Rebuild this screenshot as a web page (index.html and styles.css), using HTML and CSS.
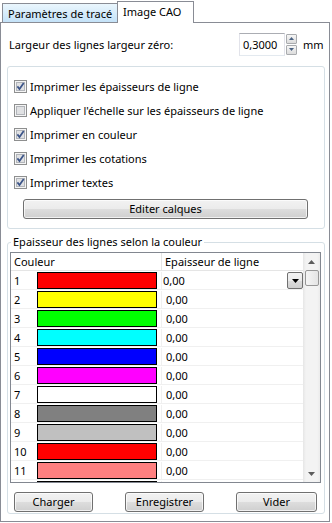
FILE: index.html
```html
<!DOCTYPE html>
<html lang="fr">
	<head>
		<meta charset="UTF-8" />
		<title>Image CAO</title>
		<link rel="stylesheet" href="styles.css">
	</head>
	<body>
		<!-- onglets -->
		<div class="tabs">
			<div class="tab">Paramètres de tracé</div>
			<div class="tab active">Image CAO</div>
		</div>

		<div class="panel">
			<div class="width-row">
				<span class="label">Largeur des lignes largeur zéro:</span>
				<div class="spin">
					<div class="spin-input">0,3000</div>
					<div class="spin-btns">
						<span class="spin-btn"><svg width="5" height="3" viewBox="0 0 5 3"><path d="M0 3h5L2.5 0z" fill="#4a6282"/></svg></span>
						<span class="spin-btn"><svg width="5" height="3" viewBox="0 0 5 3"><path d="M0 0h5L2.5 3z" fill="#4a6282"/></svg></span>
					</div>
				</div>
				<span class="unit">mm</span>
			</div>

			<!-- options d'impression -->
			<div class="group options">
				<div class="check">
					<svg class="cb" width="13" height="13" viewBox="0 0 13 13"><rect x=".5" y=".5" width="12" height="12" fill="#f5f5f5" stroke="#8e8f8f"/><rect x="2.5" y="2.5" width="8" height="8" fill="#e0e1e3" stroke="#b2b5ba"/><path d="M3.4 6.4l2.1 2.6 4.2-6" fill="none" stroke="#3b5488" stroke-width="1.7"/></svg>
					<span>Imprimer les épaisseurs de ligne</span>
				</div>
				<div class="check">
					<svg class="cb" width="13" height="13" viewBox="0 0 13 13"><rect x=".5" y=".5" width="12" height="12" fill="#f5f5f5" stroke="#8e8f8f"/><rect x="2.5" y="2.5" width="8" height="8" fill="#e0e1e3" stroke="#b2b5ba"/></svg>
					<span>Appliquer l'échelle sur les épaisseurs de ligne</span>
				</div>
				<div class="check">
					<svg class="cb" width="13" height="13" viewBox="0 0 13 13"><rect x=".5" y=".5" width="12" height="12" fill="#f5f5f5" stroke="#8e8f8f"/><rect x="2.5" y="2.5" width="8" height="8" fill="#e0e1e3" stroke="#b2b5ba"/><path d="M3.4 6.4l2.1 2.6 4.2-6" fill="none" stroke="#3b5488" stroke-width="1.7"/></svg>
					<span>Imprimer en couleur</span>
				</div>
				<div class="check">
					<svg class="cb" width="13" height="13" viewBox="0 0 13 13"><rect x=".5" y=".5" width="12" height="12" fill="#f5f5f5" stroke="#8e8f8f"/><rect x="2.5" y="2.5" width="8" height="8" fill="#e0e1e3" stroke="#b2b5ba"/><path d="M3.4 6.4l2.1 2.6 4.2-6" fill="none" stroke="#3b5488" stroke-width="1.7"/></svg>
					<span>Imprimer les cotations</span>
				</div>
				<div class="check">
					<svg class="cb" width="13" height="13" viewBox="0 0 13 13"><rect x=".5" y=".5" width="12" height="12" fill="#f5f5f5" stroke="#8e8f8f"/><rect x="2.5" y="2.5" width="8" height="8" fill="#e0e1e3" stroke="#b2b5ba"/><path d="M3.4 6.4l2.1 2.6 4.2-6" fill="none" stroke="#3b5488" stroke-width="1.7"/></svg>
					<span>Imprimer textes</span>
				</div>
				<div class="btn btn-wide">Editer calques</div>
			</div>

			<!-- épaisseurs par couleur -->
			<fieldset class="group colors">
				<legend>Epaisseur des lignes selon la couleur</legend>
				<div class="list">
					<div class="list-main">
						<div class="list-head">
							<div class="col-a">Couleur</div>
							<div class="col-b">Epaisseur de ligne</div>
						</div>
						<div class="row">
							<div class="col-a"><span class="num">1</span><span class="swatch" style="background:#ff0000"></span></div>
							<div class="col-b edit"><span class="value">0,00</span><span class="drop"><svg width="7" height="4" viewBox="0 0 7 4"><path d="M0 0h7L3.5 4z" fill="#000"/></svg></span></div>
						</div>
						<div class="row">
							<div class="col-a"><span class="num">2</span><span class="swatch" style="background:#ffff00"></span></div>
							<div class="col-b">0,00</div>
						</div>
						<div class="row">
							<div class="col-a"><span class="num">3</span><span class="swatch" style="background:#00ff00"></span></div>
							<div class="col-b">0,00</div>
						</div>
						<div class="row">
							<div class="col-a"><span class="num">4</span><span class="swatch" style="background:#00ffff"></span></div>
							<div class="col-b">0,00</div>
						</div>
						<div class="row">
							<div class="col-a"><span class="num">5</span><span class="swatch" style="background:#0000ff"></span></div>
							<div class="col-b">0,00</div>
						</div>
						<div class="row">
							<div class="col-a"><span class="num">6</span><span class="swatch" style="background:#ff00ff"></span></div>
							<div class="col-b">0,00</div>
						</div>
						<div class="row">
							<div class="col-a"><span class="num">7</span><span class="swatch" style="background:#ffffff"></span></div>
							<div class="col-b">0,00</div>
						</div>
						<div class="row">
							<div class="col-a"><span class="num">8</span><span class="swatch" style="background:#808080"></span></div>
							<div class="col-b">0,00</div>
						</div>
						<div class="row">
							<div class="col-a"><span class="num">9</span><span class="swatch" style="background:#c0c0c0"></span></div>
							<div class="col-b">0,00</div>
						</div>
						<div class="row">
							<div class="col-a"><span class="num">10</span><span class="swatch" style="background:#ff0000"></span></div>
							<div class="col-b">0,00</div>
						</div>
						<div class="row">
							<div class="col-a"><span class="num">11</span><span class="swatch" style="background:#ff8080"></span></div>
							<div class="col-b">0,00</div>
						</div>
						<div class="row">
							<div class="col-a"><span class="num">12</span><span class="swatch" style="background:#808000"></span></div>
							<div class="col-b">0,00</div>
						</div>
					</div>
					<div class="scrollbar">
						<div class="sb-btn"><svg width="7" height="4" viewBox="0 0 7 4"><path d="M0 4h7L3.5 0z" fill="#5c5c5c"/></svg></div>
						<div class="sb-thumb"></div>
						<div class="sb-track"></div>
						<div class="sb-btn"><svg width="7" height="4" viewBox="0 0 7 4"><path d="M0 0h7L3.5 4z" fill="#5c5c5c"/></svg></div>
					</div>
				</div>
				<div class="buttons">
					<div class="btn btn-load">Charger</div>
					<div class="btn btn-save">Enregistrer</div>
					<div class="btn btn-clear">Vider</div>
				</div>
			</fieldset>
		</div>
	</body>
</html>
```

FILE: styles.css
```css
/* base */
body {
	margin: 0;
	width: 332px;
	height: 523px;
	overflow: hidden;
	font-family: "Noto Sans", sans-serif;
	font-size: 11px;
	color: #000;
	background-color: #fff;
}

/* onglets */
.tabs {
	display: flex;
	align-items: flex-end;
	height: 22px;
	padding-left: 2px;
}

.tab {
	box-sizing: border-box;
	width: 116px;
	height: 19px;
	padding-left: 5px;
	line-height: 20px;
	white-space: nowrap;
	border: 1px solid #898c95;
	border-bottom: none;
	background: linear-gradient(#eaf6fd, #c4e2f8);
}

.tab.active {
	position: relative;
	z-index: 1;
	width: 77px;
	height: 22px;
	margin-left: -1px;
	margin-bottom: -1px;
	line-height: 19px;
	background: #fff;
}

.panel {
	box-sizing: border-box;
	width: 330px;
	height: 500px;
	border: 1px solid #898c95;
	background: #fff;
}

/* largeur zéro */
.width-row {
	display: flex;
	align-items: center;
	height: 24px;
	margin-top: 9px;
	padding: 0 6px 0 8px;
}

.label {
	flex: 1;
	white-space: nowrap;
}

.spin {
	display: flex;
	align-items: center;
	gap: 1px;
}

.spin-input {
	box-sizing: border-box;
	width: 46px;
	height: 23px;
	padding-left: 3px;
	line-height: 21px;
	border: 1px solid #e2e3ea;
	border-top-color: #abadb3;
	border-bottom-color: #e3e9ef;
}

.spin-btns {
	display: flex;
	flex-direction: column;
	gap: 1px;
}

.spin-btn {
	box-sizing: border-box;
	width: 11px;
	height: 10px;
	display: flex;
	align-items: center;
	justify-content: center;
	border: 1px solid #a9abae;
	border-radius: 1px;
	background: linear-gradient(#f6f6f6, #dcdcdc);
}

.unit {
	width: 20px;
	margin-left: 6px;
}

/* cadres */
.group {
	border: 1px solid #d5dfe5;
	border-radius: 3px;
}

.options {
	margin: 10px 4px 0 6px;
	padding: 7px 0 9px;
}

.check {
	display: flex;
	align-items: center;
	gap: 3px;
	height: 24px;
	padding-left: 6px;
	white-space: nowrap;
}

.cb {
	flex: none;
}

.btn {
	box-sizing: border-box;
	height: 20px;
	line-height: 18px;
	text-align: center;
	border: 1px solid #707070;
	border-radius: 3px;
	background: linear-gradient(#f2f2f2 0%, #ebebeb 50%, #dddddd 51%, #cfcfcf 100%);
	box-shadow: inset 0 0 0 1px rgba(255, 255, 255, 0.7);
}

.btn-wide {
	margin: 5px 16px 0 15px;
}

.colors {
	margin: 6px 4px 0 6px;
	padding: 0 3px 1px 2px;
	min-width: 0;
}

.colors legend {
	margin-left: 1px;
	padding: 0 2px;
	line-height: 14px;
}

/* liste des couleurs */
.list {
	display: flex;
	box-sizing: border-box;
	height: 231px;
	margin-top: 3px;
	border: 1px solid #828790;
}

.list-main {
	flex: 1;
	overflow: hidden;
}

.list-head {
	display: flex;
	box-sizing: border-box;
	height: 18px;
	line-height: 17px;
	border-bottom: 1px solid #e5e5e5;
}

.col-a {
	box-sizing: border-box;
	width: 151px;
	padding-left: 3px;
	border-right: 1px solid #e5e5e5;
	display: flex;
}

.col-b {
	flex: 1;
	padding-left: 3px;
	white-space: nowrap;
}

.row {
	display: flex;
	box-sizing: border-box;
	height: 19px;
	padding-top: 1px;
	line-height: 17px;
	border-bottom: 1px solid #f0f0f0;
}

.row .col-a {
	border-right-color: #f0f0f0;
}

.row .col-b {
	padding-left: 4px;
}

.num {
	width: 23px;
}

.swatch {
	box-sizing: border-box;
	width: 120px;
	height: 17px;
	border: 1px solid #000;
}

.row .col-b.edit {
	display: flex;
	padding-left: 1px;
}

.value {
	flex: 1;
}

.drop {
	box-sizing: border-box;
	width: 16px;
	height: 17px;
	display: flex;
	align-items: center;
	justify-content: center;
	border: 1px solid #707070;
	border-radius: 2px;
	background: linear-gradient(#f2f2f2 0%, #ebebeb 50%, #dddddd 51%, #cfcfcf 100%);
}

/* barre de défilement */
.scrollbar {
	width: 17px;
	display: flex;
	flex-direction: column;
	background: linear-gradient(90deg, #e6e6e6, #f3f3f3 3px, #f3f3f3 14px, #ebebeb);
}

.sb-btn {
	height: 17px;
	display: flex;
	align-items: center;
	justify-content: center;
}

.sb-thumb {
	box-sizing: border-box;
	height: 16px;
	margin: 0 1px 0 2px;
	border: 1px solid #979797;
	border-radius: 2px;
	background: linear-gradient(90deg, #f5f5f5, #e4e4e4);
}

.sb-track {
	flex: 1;
}

/* boutons du bas */
.buttons {
	display: flex;
	justify-content: space-between;
	margin-top: 9px;
	padding: 0 4px;
}

.btn-load,
.btn-save {
	width: 79px;
}

.btn-clear {
	width: 81px;
}
```
